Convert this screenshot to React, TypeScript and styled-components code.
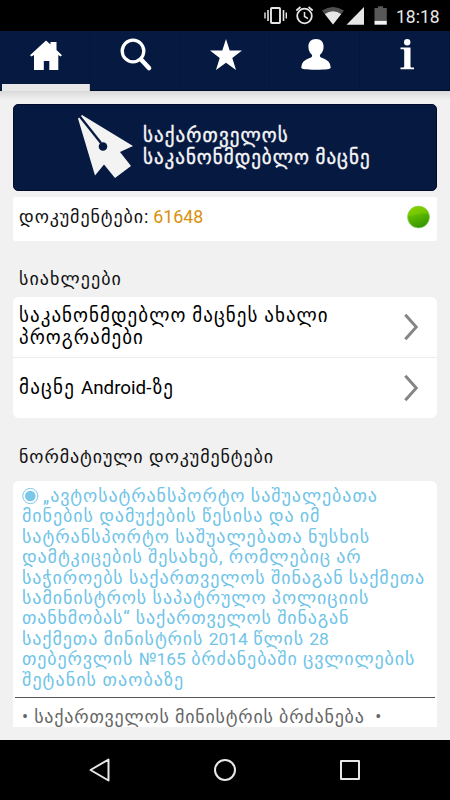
import React from 'react';
import styled, { createGlobalStyle } from 'styled-components';

const Global = createGlobalStyle`
  * { box-sizing: border-box; }
  body { margin: 0; background: #f1f1f1; }
`;

const Screen = styled.div`
  width: 450px;
  height: 800px;
  display: flex;
  flex-direction: column;
  overflow: hidden;
  background: #f1f1f1;
  font-family: Roboto, "DejaVu Sans", sans-serif;
  color: #111;
`;

const StatusBar = styled.header`
  height: 31px;
  flex: none;
  background: #000;
`;

const StatusInner = styled.div`
  display: flex;
  align-items: center;
  justify-content: flex-end;
  height: 100%;
  padding-right: 11px;
`;

const Clock = styled.span`
  width: 43px;
  margin-left: 9px;
  font-size: 17.5px;
  line-height: 20px;
  padding-top: 2px;
  color: #e6e6e6;
  white-space: nowrap;
`;

const TabBar = styled.nav`
  display: flex;
  height: 60px;
  flex: none;
  background: #061941;
  border-bottom: 1px solid #020b2b;
`;

const Tab = styled.div<{ $active?: boolean }>`
  flex: 1;
  height: 60px;
  padding: 5px 0 0 2px;
  display: flex;
  justify-content: center;
  box-shadow: inset -1px 0 0 rgba(0, 8, 40, 0.15);
  ${p => p.$active && 'background: linear-gradient(#e8e8e8, #e8e8e8) 2px 53px / 89px 7px no-repeat;'}
`;

const Content = styled.main`
  height: 649px;
  flex: none;
  padding: 13px 13px 0 13px;
  background: linear-gradient(#d9d9d9, #f1f1f1 9px);
`;

const Banner = styled.section`
  width: 424px;
  height: 87px;
  display: flex;
  padding-left: 64px;
  border-radius: 5px;
  border: 1px solid #020b2e;
  background: #061941;
`;

const BannerTitle = styled.div`
  margin: 20px 0 0 10px;
  color: #f5f5f5;
  font-size: 19px;
  line-height: 22px;
  -webkit-text-stroke: 0.4px #f5f5f5;
`;

const Line = styled.div<{ $track: number }>`
  letter-spacing: ${p => p.$track}px;
  white-space: nowrap;
`;

const Latin = styled.span<{ $size: number }>`
  font-size: ${p => p.$size}px;
  letter-spacing: 0;
`;

const CountCard = styled.section`
  width: 424px;
  height: 44px;
  margin-top: 6px;
  padding: 0 7px 5px 6px;
  display: flex;
  align-items: center;
  justify-content: space-between;
  border-radius: 2px;
  background: #fff;
  font-size: 18px;
  line-height: 22px;
`;

const CountText = styled.div`
  display: flex;
  align-items: baseline;
`;

const Count = styled.span`
  margin-left: 4px;
  font-size: 17.8px;
  color: #d9910c;
`;

const Heading = styled.h2<{ $top: number; $bottom: number }>`
  margin: ${p => p.$top}px 0 ${p => p.$bottom}px 6px;
  font-size: 18px;
  font-weight: 400;
  line-height: 22px;
`;

const NewsCard = styled.section`
  width: 424px;
  border-radius: 6px;
  background: #fff;
`;

const NewsRow = styled.div`
  height: 61px;
  padding: 0 19px 0 6px;
  display: flex;
  align-items: center;
  justify-content: space-between;
  font-size: 19px;
  line-height: 22px;
  color: #000;
  & + & { height: 60px; }
  &:first-child { border-bottom: 1px solid #ececec; }
`;

const DocCard = styled.section`
  width: 424px;
  height: 246px;
  padding: 5px 2px 0;
  overflow: hidden;
  border-radius: 6px 6px 0 0;
  background: #fff;
`;

const DocTitle = styled.div`
  height: 212px;
  padding-left: 7px;
  border-bottom: 1px solid #555;
  color: #70c4e8;
  font-size: 18px;
  line-height: 20.4px;
`;

const FirstLine = styled.div`
  display: flex;
  align-items: center;
  height: 20.4px;
  gap: 4px;
`;

const DocType = styled.div`
  padding: 8px 0 0 7px;
  color: #666;
  font-size: 18px;
  line-height: 22px;
`;

const NavBar = styled.footer`
  height: 60px;
  flex: none;
  display: flex;
  align-items: center;
  justify-content: space-around;
  padding: 0 37px;
  background: #000;
`;

function Text({ children, track, latin = 17.4 }: { children: string; track: number; latin?: number }) {
  const parts = children.split(/([A-Za-z0-9№]+)/);
  return (
    <Line $track={track}>
      {parts.map((part, i) => (i % 2 ? <Latin key={i} $size={latin}>{part}</Latin> : part))}
    </Line>
  );
}

const docLines: [string, number][] = [
  ['მინების დამუქების წესისა და იმ', 0.93],
  ['სატრანსპორტო საშუალებათა ნუსხის', 0.97],
  ['დამტკიცების შესახებ, რომლებიც არ', 0.88],
  ['საჭიროებს საქართველოს შინაგან საქმეთა', 0.9],
  ['სამინისტროს საპატრულო პოლიციის', 0.92],
  ['თანხმობას“ საქართველოს შინაგან', 0.84],
  ['საქმეთა მინისტრის 2014 წლის 28', 0.9],
  ['თებერვლის №165 ბრძანებაში ცვლილების', 0.87],
  ['შეტანის თაობაზე', 1.07],
];

const StatusIcons = () => (
  <svg width="124" height="31" viewBox="263 0 124 31" fill="none" stroke="#e6e6e6">
    <rect x="271" y="8" width="9" height="15" rx="0.8" strokeWidth="1.9" />
    <path d="M268 10v11M283.5 10v11" strokeWidth="1.6" />
    <path d="M265 12.5v6M286.300 12.5v6" strokeWidth="1.4" />
    <circle cx="304.500" cy="16" r="7.300" strokeWidth="1.800" />
    <path d="M304.500 12v4.500l3.500 2.200" strokeWidth="1.500" />
    <path d="M296.300 10.500l4.200-3.500M312.700 10.500l-4.200-3.500" strokeWidth="1.700" />
    <path d="M322 10.500Q333 3.500 344 10.500L333 24.500z" fill="#505050" stroke="none" />
    <path d="M324.800 14Q333 8.500 341.200 14L333 24.500z" fill="#e6e6e6" stroke="none" />
    <path d="M364 7v17.700h-17.500z" fill="#e6e6e6" stroke="none" />
    <path d="M374.500 8h3.500v-1.800h5V8h3.800v12.800h-12.300z" fill="#585858" stroke="none" />
    <path d="M374.500 20.800h12.300v3.900h-12.300z" fill="#f3f3f3" stroke="none" />
  </svg>
);

const HomeIcon = () => (
  <svg width="34" height="40" viewBox="0 0 34 40" fill="#fff">
    <path d="M17 4.500L21.500 8.500V6h6v8L33 19.200l-1.500 1.300L29.300 19v15h-9V25h-5.500v9H5V19l-2.500 1.500L1 19.200z" />
  </svg>
);

const SearchIcon = () => (
  <svg width="34" height="40" viewBox="0 0 34 40" fill="none" stroke="#fff" strokeLinecap="round">
    <circle cx="14" cy="15" r="10.800" strokeWidth="3.300" />
    <path d="M22.500 24L30 32" strokeWidth="4.600" />
  </svg>
);

const StarIcon = () => (
  <svg width="34" height="40" viewBox="0 0 34 40" fill="#fff">
    <path d="M17 3l3.700 11.500H33l-9.700 7.500L27 34l-10-7.300L7 34l3.700-12L1 14.500h12.300z" />
  </svg>
);

const UserIcon = () => (
  <svg width="34" height="40" viewBox="0 0 34 40" fill="#fff">
    <path d="M17 3c5 0 7.600 3 7.600 7.700 0 4-1.800 6.500-3.700 8.300 0 1.500.3 2.200 1.600 2.800 4 1.700 8.800 2.700 9.200 10 0 1.200-4 2-14.700 2s-14.700-.8-14.700-2c.4-7.300 5.200-8.300 9.200-10 1.300-.6 1.600-1.300 1.600-2.800-1.900-1.800-3.700-4.300-3.700-8.300C9.400 6 12 3 17 3z" />
  </svg>
);

const InfoIcon = () => (
  <svg width="34" height="40" viewBox="0 0 34 40" fill="#fff">
    <circle cx="18.200" cy="6.200" r="3.200" />
    <path d="M11.500 11.500H21.500V30.500q0 1 1 1h2.500v1.800H11.500v-1.800H14q1.200 0 1.200-1V14.500q0-1.200-1.200-1.200h-2.500z" />
  </svg>
);

const PenLogo = () => (
  <svg width="55" height="85" viewBox="78 105 55 85">
    <path fill="#f3f3f3" d="M82 115L133 146 120 152 131 166 115 178 104 164.500 95 175.500 78 118.500z" />
    <path d="M79.500 116L101 143" stroke="#061941" strokeWidth="2.300" />
    <circle cx="103" cy="146.500" r="4.300" fill="#061941" />
  </svg>
);

const Chevron = () => (
  <svg width="14" height="28" viewBox="0 0 14 28" fill="none" stroke="#858585" strokeWidth="3">
    <path d="M1.300 1.800L12.300 14 1.300 26.200" />
  </svg>
);

const StatusDot = () => (
  <svg width="24" height="24" viewBox="0 0 24 24">
    <defs>
      <linearGradient id="dot" x1="0.200" y1="0" x2="0.600" y2="1">
        <stop offset="0" stopColor="#85d000" />
        <stop offset="0.450" stopColor="#5db800" />
        <stop offset="1" stopColor="#329400" />
      </linearGradient>
    </defs>
    <circle cx="12.500" cy="12" r="11" fill="url(#dot)" stroke="#9bd37a" strokeWidth="0.600" />
    <path d="M2 10.500Q3 1.500 12.500 1.400T23 9Q16.500 8 11.500 9.500T2 10.500z" fill="#91da00" opacity="0.350" />
  </svg>
);

const Radio = () => (
  <svg width="17" height="18" viewBox="0 0 17 18">
    <circle cx="8.300" cy="9" r="7.600" fill="none" stroke="#7bc7e8" strokeWidth="1" />
    <circle cx="8.300" cy="9" r="5.300" fill="#7bc7e8" />
  </svg>
);

const NavIcon = ({ children }: { children: React.ReactNode }) => (
  <svg width="24" height="24" viewBox="0 0 24 24" fill="none" stroke="#e8e8e8" strokeWidth="2" strokeLinejoin="round">
    {children}
  </svg>
);

export default function App() {
  return (
    <Screen>
      <Global />
      <StatusBar>
        <StatusInner>
          <StatusIcons />
          <Clock>18:18</Clock>
        </StatusInner>
      </StatusBar>
      <TabBar>
        <Tab $active><HomeIcon /></Tab>
        <Tab><SearchIcon /></Tab>
        <Tab><StarIcon /></Tab>
        <Tab><UserIcon /></Tab>
        <Tab><InfoIcon /></Tab>
      </TabBar>
      <Content>
        <Banner>
          <PenLogo />
          <BannerTitle>
            <Text track={1.1}>საქართველოს</Text>
            <Text track={1}>საკანონმდებლო მაცნე</Text>
          </BannerTitle>
        </Banner>
        <CountCard>
          <CountText>
            <Text track={0.91}>დოკუმენტები:</Text>
            <Count>61648</Count>
          </CountText>
          <StatusDot />
        </CountCard>
        <Heading $top={27} $bottom={7}><Text track={1.07}>სიახლეები</Text></Heading>
        <NewsCard>
          <NewsRow>
            <div>
              <Text track={1.05}>საკანონმდებლო მაცნეს ახალი</Text>
              <Text track={1.02}>პროგრამები</Text>
            </div>
            <Chevron />
          </NewsRow>
          <NewsRow>
            <Text track={1.2} latin={18.8}>მაცნე Android-ზე</Text>
            <Chevron />
          </NewsRow>
        </NewsCard>
        <Heading $top={28} $bottom={13}><Text track={0.92}>ნორმატიული დოკუმენტები</Text></Heading>
        <DocCard>
          <DocTitle>
            <FirstLine>
              <Radio />
              <Text track={0.93}>„ავტოსატრანსპორტო საშუალებათა</Text>
            </FirstLine>
            {docLines.map(([text, track]) => <Text key={text} track={track}>{text}</Text>)}
          </DocTitle>
          <DocType><Text track={0.8}>{'• საქართველოს მინისტრის ბრძანება \u00a0•'}</Text></DocType>
        </DocCard>
      </Content>
      <NavBar>
        <NavIcon><path d="M2.500 12L20.500 1.500v21z" /></NavIcon>
        <NavIcon><circle cx="12" cy="12" r="10" /></NavIcon>
        <NavIcon><rect x="3" y="3" width="18" height="18" /></NavIcon>
      </NavBar>
    </Screen>
  );
}
